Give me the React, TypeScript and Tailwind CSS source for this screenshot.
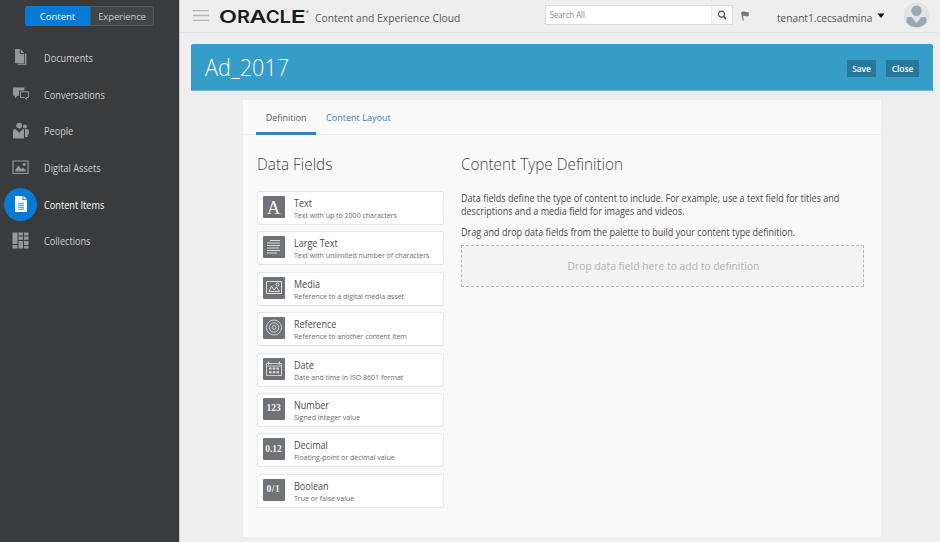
import React from "react";

type NavItem = { label: string; icon: React.ReactNode; active?: boolean };

const DocsIcon = () => (
  <svg width="16" height="18" viewBox="0 0 16 18" fill="#94989b">
    <path d="M2 1h4.800v5h4.400v9.200H2z" />
    <path d="M7.800 1l3.400 4H7.800z" />
    <path d="M12 5.500h1.400v11.300H4.500v-1H12z" />
  </svg>
);

const ChatIcon = () => (
  <svg width="18" height="16" viewBox="0 0 18 16" fill="#94989b">
    <path d="M1 1.500h11.500v3H7v5.300H5.500L3 12.300V9.800H1z" />
    <path d="M8.500 5.800h8v5.700h-2v2l-2.200-2H8.500z" fill="none" stroke="#94989b" strokeWidth="1" />
  </svg>
);

const PeopleIcon = () => (
  <svg width="18" height="18" viewBox="0 0 18 18" fill="#94989b">
    <circle cx="7.200" cy="3.600" r="2.900" />
    <path d="M1 8.500q0-1.300 1.300-1.300h1.400l3.500 3.600 3.500-3.600h1.300V16.500H1z" />
    <circle cx="12.900" cy="4.400" r="2" />
    <path d="M13 7.200h2.500q1.300 0 1.300 1.300v4h-1V15H13z" />
  </svg>
);

const ImageIcon = () => (
  <svg width="17" height="15" viewBox="0 0 17 15" fill="#94989b">
    <path d="M1 1h15v12.500H1z" fill="none" stroke="#94989b" strokeWidth="1.200" />
    <path d="M3.300 11.500V10L6.500 5.500l2.700 3.700 1.300-1.700 3.300 2.500v1.500z" />
    <circle cx="12.200" cy="4.600" r="1.500" />
  </svg>
);

const ItemIcon = () => (
  <svg width="14" height="18" viewBox="0 0 14 18">
    <path d="M1 1h7.500v4H13v12H1z" fill="#fff" />
    <path d="M9.500 1L13 4.200H9.500z" fill="#fff" />
    <path d="M4 8.500h6M4 10.500h6M4 12.500h6M4 14.300h6" stroke="#78b3e4" strokeWidth="1.300" />
  </svg>
);

const GridIcon = () => (
  <svg width="17" height="17" viewBox="0 0 17 17" fill="#94989b">
    <path d="M.5.500h5v11.500h-5zM.5 13h5v3.500h-5zM6.500.500h4.500v3H6.500zM12 .5h4.500v3H12zM6.500 4.500h4.500v3.300H6.500zM12 4.500h4.500v3.300H12zM6.500 9h4.500v7.500H6.500zM12 9h4.500v4H12zM12 14h4.500v2.500H12z" />
  </svg>
);

const nav: NavItem[] = [
  { label: "Documents", icon: <DocsIcon /> },
  { label: "Conversations", icon: <ChatIcon /> },
  { label: "People", icon: <PeopleIcon /> },
  { label: "Digital Assets", icon: <ImageIcon /> },
  { label: "Content Items", icon: <ItemIcon />, active: true },
  { label: "Collections", icon: <GridIcon /> },
];

const LinesGlyph = () => (
  <svg width="22" height="22" viewBox="0 0 22 22" stroke="#dededf" strokeWidth="1">
    <path d="M7 4.500h10M4 7h13M4 9.500h13M4 12h12M4 14.500h13M4 17h10" />
  </svg>
);
const MediaGlyph = () => (
  <svg width="22" height="22" viewBox="0 0 22 22" stroke="#dededf" strokeWidth="1" fill="none">
    <path d="M3.500 4.500h15v12h-15z" />
    <path d="M6 14.500L8.500 9l2.500 4 2.500-3 3 4.500z" />
    <circle cx="14.500" cy="7.500" r="1.500" />
  </svg>
);
const TargetGlyph = () => (
  <svg width="22" height="22" viewBox="0 0 22 22" stroke="#d0d0d2" strokeWidth="1" fill="none">
    <circle cx="11" cy="10.500" r="7.500" />
    <circle cx="11" cy="10.500" r="4.700" />
    <circle cx="11" cy="10.500" r="1.900" />
  </svg>
);
const CalendarGlyph = () => (
  <svg width="22" height="22" viewBox="0 0 22 22" fill="#dededf">
    <path d="M3.500 5.500h15v12h-15zM3.500 8h15" fill="none" stroke="#cfcfd1" />
    <path d="M5 3.500h1.200v3H5zM15.800 3.500H17v3h-1.200zM6 9.500h2.500v2H6zM9.800 9.500h2.500v2H9.800zM13.500 9.500H16v2h-2.500zM6 13.200h2.500v2H6zM9.800 13.200h2.500v2H9.800zM13.500 13.200H16v2h-2.500z" />
  </svg>
);

const fields = [
  { name: "Text", desc: "Text with up to 2000 characters", glyph: <span className="text-[19px]">A</span> },
  { name: "Large Text", desc: "Text with unlimited number of characters", glyph: <LinesGlyph /> },
  { name: "Media", desc: "Reference to a digital media asset", glyph: <MediaGlyph /> },
  { name: "Reference", desc: "Reference to another content item", glyph: <TargetGlyph /> },
  { name: "Date", desc: "Date and time in ISO 8601 format", glyph: <CalendarGlyph /> },
  { name: "Number", desc: "Signed integer value", glyph: <span className="text-[9.500px] font-bold">123</span> },
  { name: "Decimal", desc: "Floating-point or decimal value", glyph: <span className="text-[9.500px] font-bold">0.12</span> },
  { name: "Boolean", desc: "True or false value", glyph: <span className="text-[9.500px] font-bold tracking-[0.600px]">0/1</span> },
];

// Each wordmark letter is stretched to its own width.
const wordmark = [
  { c: "O", x: 0, w: 18 },
  { c: "R", x: 18, w: 13 },
  { c: "A", x: 30.500, w: 17 },
  { c: "C", x: 46.800, w: 14 },
  { c: "L", x: 60.500, w: 11.500 },
  { c: "E", x: 71.800, w: 15 },
];

function Sidebar() {
  return (
    <aside className="w-[180px] shrink-0 border-r border-[#c6c7c8] bg-[#3a3b3d]">
      <div className="ml-[25px] mt-[6px] flex h-[20px] w-[129px] overflow-hidden rounded-[2px] text-[9.500px] leading-[22px]">
        <div className="w-[65px] bg-[#067ad5] text-center text-white">Content</div>
        <div className="flex-1 border border-[#55585b] bg-[#434648] text-center leading-[20px] tracking-[-0.100px] text-[#c5c6c7]">Experience</div>
      </div>
      <nav className="mt-[13px]">
        {nav.map((n) => (
          <div key={n.label} className="flex h-[36.700px] items-center">
            <div className={"ml-[4px] flex size-[33px] items-center justify-center rounded-full " + (n.active ? "bg-[#067ad5]" : "")}>{n.icon}</div>
            <span className={"ml-[7px] origin-left scale-x-[0.915] pt-[2px] text-[10px] " + (n.active ? "text-white" : "text-[#d0d1d2]")}>{n.label}</span>
          </div>
        ))}
      </nav>
    </aside>
  );
}

function Header() {
  return (
    <header className="flex h-[33px] shrink-0 items-start border-b border-[#dde4ea]">
      <svg className="ml-[13px] mt-[9px]" width="16" height="13" viewBox="0 0 16 13" stroke="#b3b4b5" strokeWidth="1.300">
        <path d="M0 1.700h16M0 6.500h16M0 11.300h16" />
      </svg>
      <svg className="ml-[10px] mt-[3px]" width="92" height="26" viewBox="0 0 92 26" fontFamily="Inter, 'Liberation Sans', sans-serif" fill="#1b1b1b">
        {wordmark.map((l) => (
          <text key={l.c} x={l.x} y="19.800" fontSize="17.500" fontWeight="600" textLength={l.w} lengthAdjust="spacingAndGlyphs">{l.c}</text>
        ))}
        <text x="86.500" y="11" fontSize="5" fill="#444">®</text>
      </svg>
      <span className="ml-[4px] mt-[10px] w-[150px] origin-left scale-x-[0.980] whitespace-nowrap text-[10.500px] leading-[17px] text-[#555]">Content and Experience Cloud</span>
      <div className="ml-[80px] mt-[5px] flex h-[20px] w-[188px] border border-[#d5dbe0] bg-white">
        <span className="flex-1 origin-left scale-x-[0.930] pl-[4px] text-[8.300px] leading-[18px] text-[#888]">Search All</span>
        <div className="flex w-[21px] items-center justify-center border-l border-[#eceeef] bg-[#f8f8f8]">
          <svg width="10" height="10" viewBox="0 0 10 10" fill="none" stroke="#555" strokeWidth="1.200">
            <circle cx="4.500" cy="4.200" r="3" />
            <path d="M6.700 6.500L9 9.200" strokeWidth="1.600" />
          </svg>
        </div>
      </div>
      <svg className="ml-[8px] mt-[11px]" width="8" height="10" viewBox="0 0 8 10" fill="#777">
        <path d="M0 1.500Q2.500-.3 4.500.8 6 1.500 7.700.9V5Q6 5.700 4.500 5 3 4.500 2 5l.8 4.500H1.700z" />
      </svg>
      <span className="ml-[28px] mt-[9px] w-[96px] origin-left scale-x-[0.965] whitespace-nowrap text-[10.500px] leading-[18px] text-[#555]">tenant1.cecsadmina</span>
      <svg className="ml-[4px] mt-[13px]" width="8" height="6" viewBox="0 0 8 6"><path d="M.5.5H7.500L4 5z" fill="#111" /></svg>
      <svg className="ml-[18px] mt-[2px]" width="27" height="27" viewBox="0 0 27 27">
        <circle cx="13.500" cy="13.500" r="13" fill="#dfe4e9" />
        <circle cx="13.500" cy="8.700" r="5.200" fill="#9ba8b4" />
        <path d="M3.500 17q0-2 2-2h3l5 6 5-6h3q2 0 2 2v3.500A13 13 0 0 1 3.500 20.500z" fill="#9ba8b4" />
      </svg>
    </header>
  );
}

export default function App() {
  return (
    <div className="flex h-[542px] w-[940px] overflow-hidden bg-[#eeeeee] font-['Open_Sans','Noto_Sans',sans-serif]">
      <Sidebar />
      <div className="flex min-w-0 flex-1 flex-col">
        <Header />
        <div className="ml-[11px] mt-[11px] flex h-[47px] w-[742px] shrink-0 items-center rounded-t-[2px] border-b border-[#72b9d6] bg-[#359dc7] pl-[14px] pr-[14px]">
          <h1 className="flex-1 origin-left scale-x-[0.940] text-[23px] font-light leading-[30px] text-white">Ad_2017</h1>
          <button className="mt-[3px] h-[17px] w-[29px] bg-[#26799b] pt-[2px] text-[8.500px] font-semibold tracking-[-0.100px] text-white">Save</button>
          <button className="ml-[10px] mt-[3px] h-[17px] w-[33px] bg-[#26799b] pt-[2px] text-[8.500px] font-semibold tracking-[-0.100px] text-white">Close</button>
        </div>
        <main className="ml-[63px] mt-[9px] h-[437px] w-[638px] shrink-0 bg-[#fafafa]">
          <div className="flex h-[35px] items-start border-b border-[#eeeeee] pl-[13px] text-[9.700px] leading-[36px]">
            <div className="h-[35px] w-[60px] border-b-[3px] border-[#3580c0] text-center text-[#555]">
              <span className="inline-block scale-x-[0.920]">Definition</span>
            </div>
            <div className="ml-[10px] origin-left scale-x-[0.935] whitespace-nowrap text-[#3a7ab3]">Content Layout</div>
          </div>
          <div className="flex pl-[13.500px]">
            <section className="w-[187px] pt-[17px]">
              <h2 className="origin-left scale-x-[0.900] text-[17px] font-light leading-[24px] text-[#444]">Data Fields</h2>
              <div className="mt-[15px] flex flex-col gap-[6.400px]">
                {fields.map((f) => (
                  <div key={f.name} className="flex h-[34px] rounded-[2px] border border-[#e2e8ec] bg-white">
                    <div className="ml-[5px] mt-[4px] flex size-[22px] items-center justify-center rounded-[1px] bg-[#717276] font-['Liberation_Serif',serif] leading-none text-[#f0f0f0]">{f.glyph}</div>
                    <div className="ml-[9.500px] mt-[5px] whitespace-nowrap">
                      <div className="origin-left scale-x-[0.900] text-[10px] leading-[13px] text-[#4a4a4a]">{f.name}</div>
                      <div className="text-[7.030px] leading-[11px] text-[#6b6b6b]">{f.desc}</div>
                    </div>
                  </div>
                ))}
              </div>
            </section>
            <section className="ml-[17px] w-[403px] pt-[17px] text-[10px] leading-[13px] text-[#484848]">
              <h2 className="origin-left scale-x-[0.900] text-[17px] font-light leading-[24px] text-[#444]">Content Type Definition</h2>
              <p className="mt-[16px] origin-left scale-x-[0.903] whitespace-nowrap">
                Data fields define the type of content to include. For example, use a text field for titles and
                <br />
                descriptions and a media field for images and videos.
              </p>
              <p className="mt-[8px] origin-left scale-x-[0.903] whitespace-nowrap">Drag and drop data fields from the palette to build your content type definition.</p>
              <div className="mt-[6px] flex h-[42px] items-center justify-center border border-dashed border-[#b8b8b8] bg-[#f3f3f3] text-[10.500px] text-[#b2b2b2]">
                <span className="ml-[3px] scale-x-[0.985]">Drop data field here to add to definition</span>
              </div>
            </section>
          </div>
        </main>
      </div>
    </div>
  );
}
